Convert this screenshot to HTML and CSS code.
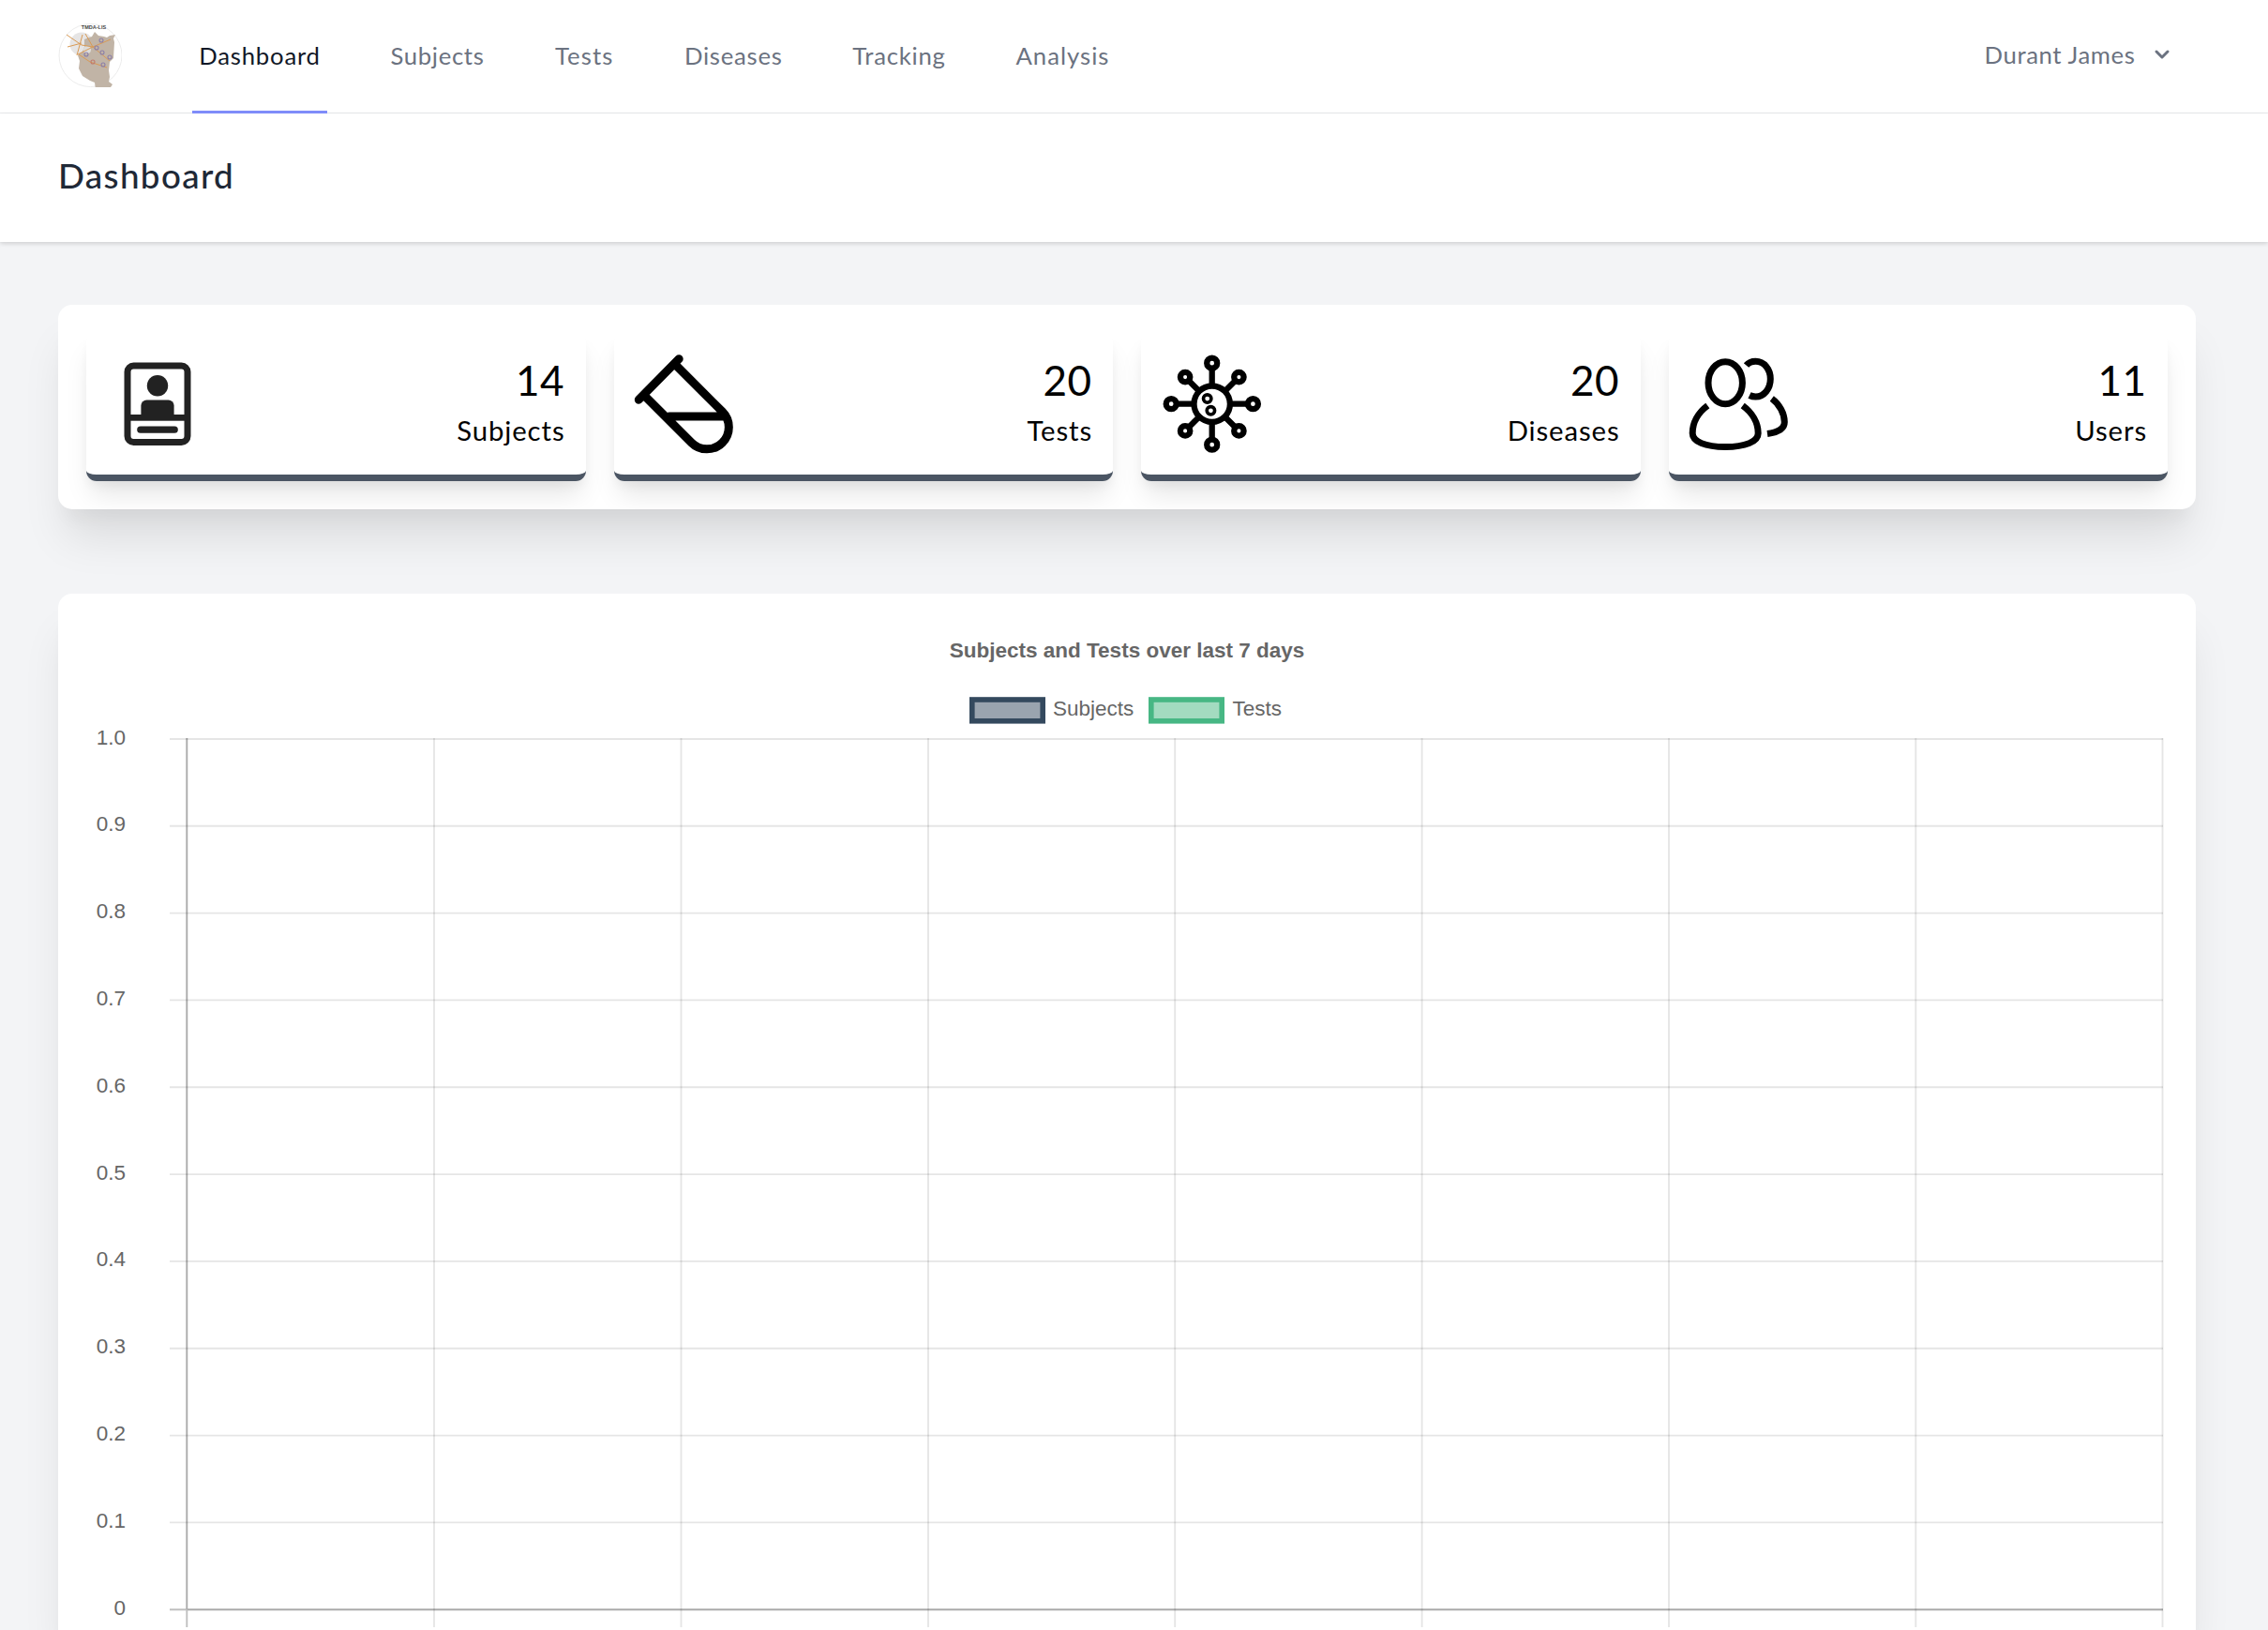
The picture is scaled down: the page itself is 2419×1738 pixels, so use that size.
FILE: index.html
```html
<!DOCTYPE html>
<html lang="en">
<head>
<meta charset="utf-8">
<title>Dashboard</title>
<link rel="stylesheet" href="styles.css">
</head>
<body>
<nav class="nav">
  <div class="container nav-inner">
    <svg class="logo" viewBox="0 0 68 68">
      <circle cx="34.5" cy="34" r="33.5" fill="#fff" stroke="#ececec"/>
      <circle cx="25" cy="22" r="12.5" fill="#e6e5e5"/>
      <path d="M28 17l5-2 3-1 3-5 4 4 6 1 3 1 3-2 6-1-2 4 1 4-1 17-4 4-1 9 1 7-1 5 4 3-2 3-3 2-13 1-1-8-5-2-8-5-4-8 1-8-2-6 5-4 2-5z" fill="#c1b4a6"/>
      <circle cx="31" cy="28" r="4" fill="#dddcda"/>
      <g fill="none" stroke="#d99a55" stroke-width="1"><path d="M9 12l16 11 12 2 19-8M29 11l8 14 18 15M10 25l15-4M37 25l-16 8M22 33l12 8 18 6M20 34l6-22"/></g>
      <g fill="none" stroke="#8b7fa8" stroke-width="1.1"><circle cx="46" cy="18" r="2"/><circle cx="41" cy="26" r="2"/><circle cx="47" cy="31" r="2"/><circle cx="55" cy="36" r="2"/><circle cx="30" cy="33" r="2"/><circle cx="48" cy="44" r="2"/><circle cx="37" cy="41" r="2" stroke="#c07a6c"/></g>
      <text class="logo-text" x="38" y="5.5">TMDA-LIS</text>
    </svg>
    <div class="links">
      <a class="link active w1">Dashboard</a>
      <a class="link w2">Subjects</a>
      <a class="link w3">Tests</a>
      <a class="link w4">Diseases</a>
      <a class="link w5">Tracking</a>
      <a class="link w6">Analysis</a>
    </div>
    <div class="user"><span>Durant James</span>
      <svg class="chevron" viewBox="0 0 20 20"><path fill="#6b7280" fill-rule="evenodd" d="M5.293 7.293a1 1 0 011.414 0L10 10.586l3.293-3.293a1 1 0 111.414 1.414l-4 4a1 1 0 01-1.414 0l-4-4a1 1 0 010-1.414z"/></svg>
    </div>
  </div>
</nav>
<header class="header"><div class="container"><h2 class="title">Dashboard</h2></div></header>
<main class="container main">
  <section class="panel stats">
    <article class="stat">
      <svg class="icon" viewBox="0 0 105 105" fill="#222"><rect x="21" y="12" width="64" height="81.5" rx="6.5" fill="none" stroke="#222" stroke-width="7"/><ellipse cx="53" cy="33.3" rx="11.2" ry="11.3"/><path d="M35.4 66V54.5a6 6 0 0 1 6-6h23.200a6 6 0 0 1 6 6V66z"/><rect x="20" y="64" width="66" height="6.700"/><rect x="31.200" y="76.500" width="43.600" height="7.300" rx="3.600"/></svg>
      <div class="figures"><span class="num">14</span><span class="label">Subjects</span></div>
    </article>
    <article class="stat">
      <svg class="icon" viewBox="0 0 105 105" fill="none" stroke="#000" stroke-width="9" stroke-linecap="round"><path d="M47.200 4.700L4.300 48.200M44.500 12L93.500 61A23.300 23.300 0 0 1 60.500 94L12 45.500M37 66H96" /></svg>
      <div class="figures"><span class="num">20</span><span class="label">Tests</span></div>
    </article>
    <article class="stat">
      <svg class="icon" viewBox="0 0 105 105" fill="none" stroke="#000" stroke-width="6.300"><circle cx="52.700" cy="52.700" r="19.200"/><path d="M52.700 34V15M52.700 72V91M34 52.700H15M72 52.700H91M39 39L28 28M66.500 39L77.500 28M39 66.500L28 77.500M66.500 66.500L77.500 77.500"/><g><circle cx="52.700" cy="9.200" r="5.500"/><circle cx="52.700" cy="96.200" r="5.500"/><circle cx="9.200" cy="52.700" r="5.500"/><circle cx="96.400" cy="52.700" r="5.500"/><circle cx="24.100" cy="24.100" r="5.200"/><circle cx="81.400" cy="24.100" r="5.200"/><circle cx="24.100" cy="81.400" r="5.200"/><circle cx="81.400" cy="81.400" r="5.200"/></g><g stroke-width="3.600"><circle cx="47.700" cy="47.100" r="4.200"/><circle cx="51.400" cy="59.800" r="4.200"/></g></svg>
      <div class="figures"><span class="num">20</span><span class="label">Diseases</span></div>
    </article>
    <article class="stat">
      <svg class="icon" viewBox="0 0 105 105" fill="none" stroke="#000" stroke-width="7"><ellipse cx="38.200" cy="30.200" rx="18.200" ry="22.500"/><path d="M19.300 54.500C9 62 3.200 73 3.200 84C3.200 93 17 98.500 38.200 98.500C59.400 98.500 73.200 93 73.200 84C73.200 73 67 62 56.700 54.500M60.500 11.500C63 8.500 66.500 7.200 70.500 7.200C79.500 7.200 86.300 15.500 86.300 26C86.300 36.500 79.500 45 70.500 45C68 45 66 44.500 64 43.500M87.800 47C96 53 101.300 63 101.300 72C101.300 79 94 83 83 84.500"/></svg>
      <div class="figures"><span class="num">11</span><span class="label">Users</span></div>
    </article>
  </section>
  <section class="panel chart">
    <svg class="plot" viewBox="0 0 2280 1105">
      <text class="chart-title" x="1140" y="67.5">Subjects and Tests over last 7 days</text>
      <g stroke-width="5.600">
        <rect x="974.800" y="113" width="75.400" height="22.800" fill="#9aa4af" stroke="#34495e"/>
        <rect x="1165.800" y="113" width="75.400" height="22.800" fill="#a3dbc0" stroke="#47b784"/>
      </g>
      <text x="1061" y="130">Subjects</text>
      <text x="1252.5" y="130">Tests</text>
      <g fill="none" stroke="#000" stroke-width="1.875">
        <path stroke-opacity=".1" d="M119 155H2245M119 247.800H2245M119 340.600H2245M119 433.400H2245M119 526.300H2245M119 619.100H2245M119 711.900H2245M119 804.800H2245M119 897.600H2245M119 990.400H2245"/>
        <path stroke-opacity=".1" d="M401 154V1102M664.500 154V1102M928 154V1102M1191.200 154V1102M1454.600 154V1102M1718 154V1102M1981.300 154V1102M2244.500 154V1102"/>
        <path stroke-opacity=".25" d="M137.300 154V1102M119 1083.200H2245"/>
        <path stroke-opacity=".1" d="M137.300 154V1083M138 1083.200H2245"/>
      </g>
      <g text-anchor="end">
        <text x="72" y="160.500">1.0</text><text x="72" y="253.300">0.9</text><text x="72" y="346.100">0.8</text><text x="72" y="439.400">0.7</text><text x="72" y="532.200">0.6</text><text x="72" y="625">0.5</text><text x="72" y="717.400">0.4</text><text x="72" y="810.400">0.3</text><text x="72" y="903.400">0.2</text><text x="72" y="996.400">0.1</text><text x="72" y="1089.400">0</text>
      </g>
    </svg>
  </section>
</main>
</body>
</html>
```
FILE: styles.css
```css
* { box-sizing: border-box; }
body { margin: 0; background: #f3f4f6; font-family: Lato, "Noto Sans", sans-serif; color: #000; }
.container { width: 2280px; margin-left: 62px; }
.nav { height: 121px; background: #fff; border-bottom: 1px solid #e9eaec; }
.nav-inner { display: flex; height: 121px; align-items: center; }
.logo { width: 68px; height: 68px; display: block; margin-bottom: 3px; }
.logo-text { font: bold 5.5px "Liberation Sans", sans-serif; text-anchor: middle; fill: #444; }
.links { display: flex; gap: 60px; margin-left: 75px; height: 121px; }
.link { display: flex; align-items: center; justify-content: center; font-size: 25.7px; color: #6b7280; border-bottom: 3px solid transparent; white-space: nowrap; }
.active { color: #111827; border-color: #7f8cf9; }
.w1 { width: 144px; letter-spacing: .8px; }
.w2 { width: 115px; letter-spacing: .65px; }
.w3 { width: 78.5px; letter-spacing: 1.1px; }
.w4 { width: 119.5px; letter-spacing: .75px; }
.w5 { width: 114px; letter-spacing: .75px; }
.w6 { width: 115px; letter-spacing: 1px; }
.user { display: flex; align-items: center; margin-left: auto; margin-right: 21px; gap: 13.5px; font-size: 25.7px; letter-spacing: .6px; color: #6b7280; margin-bottom: 5px; }
.chevron { width: 30px; height: 30px; }
.header { height: 137px; background: #fff; box-shadow: 0 1.9px 5.6px rgba(0,0,0,.1), 0 1.9px 3.75px rgba(0,0,0,.06); display: flex; align-items: center; }
.title { margin: 0 0 5px; font-size: 36.8px; font-weight: 500; letter-spacing: 1.35px; color: #1f2937; line-height: 47px; }
.main { padding-top: 67px; display: flex; flex-direction: column; gap: 90px; }
.panel { background: #fff; border-radius: 15px; box-shadow: 0 37.5px 46.9px -9.4px rgba(0,0,0,.1), 0 18.75px 18.75px -9.4px rgba(0,0,0,.04); overflow: hidden; }
.stats { height: 218px; padding: 30px; display: grid; grid-template-columns: repeat(4, 1fr); gap: 30px; }
.stat { background: #fff; border-radius: 11px; border-bottom: 7.5px solid #4b5563; padding: 22.5px; display: flex; justify-content: space-between; box-shadow: 0 18.75px 28.1px -5.6px rgba(0,0,0,.1), 0 7.5px 11.25px -3.75px rgba(0,0,0,.05); }
.icon { width: 105px; height: 105px; display: block; overflow: visible; }
.figures { display: flex; flex-direction: column; align-items: flex-end; }
.num { font-size: 44px; line-height: 55px; letter-spacing: .5px; }
.label { font-size: 29.3px; line-height: 51px; letter-spacing: .9px; margin-right: -.5px; }
.chart { height: 1105px; border-radius: 15px 15px 0 0; }
.plot { display: block; width: 2280px; height: 1105px; font-family: "Liberation Sans", Arial, sans-serif; font-size: 22.5px; fill: #666; }
.chart-title { font-weight: bold; text-anchor: middle; }
```
